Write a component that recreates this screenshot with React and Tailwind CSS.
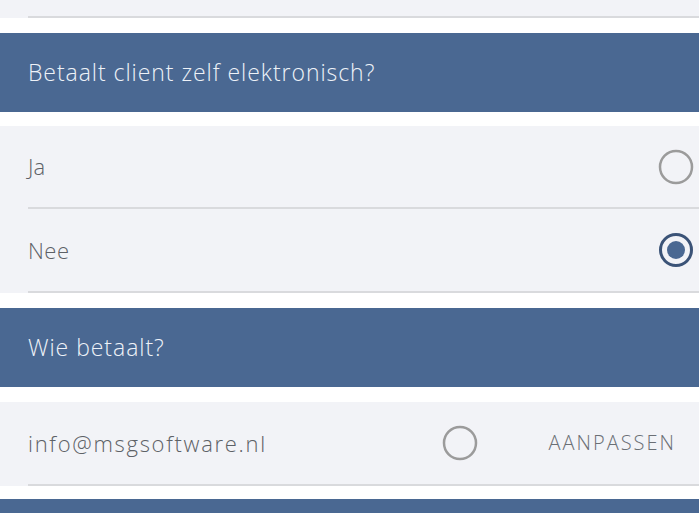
const Radio = ({ checked }) =>
  checked ? (
    <svg width="36" height="36" viewBox="0 0 36 36">
      <circle cx="18" cy="18" r="15.5" fill="none" stroke="#3b5377" strokeWidth="3" />
      <circle cx="18" cy="18" r="9" fill="#4a6892" />
    </svg>
  ) : (
    <svg width="36" height="36" viewBox="0 0 36 36">
      <circle cx="18" cy="18" r="16" fill="none" stroke="#9b9b9b" strokeWidth="2.5" />
    </svg>
  )

const Header = ({ children, className = "" }) => (
  <div className={`bg-[#4a6892] text-[#eef2f8] text-[23px] tracking-[0.95px] pl-[28px] flex items-center ${className}`}>
    {children}
  </div>
)

const Row = ({ children, h = "h-[83px]" }) => (
  <div className={`ml-[28px] ${h} border-b-2 border-[#d9dadd] flex items-center justify-between`}>
    {children}
  </div>
)

export default function App() {
  return (
    <div className="w-[699px] h-[513px] overflow-hidden bg-white font-['Open_Sans',sans-serif] font-light">
      {/* top panel remnant */}
      <div className="bg-[#f2f3f7] h-[18px]">
        <div className="ml-[28px] h-full border-b-2 border-[#d9dadd]" />
      </div>

      <Header className="mt-[15px] h-[79px]">Betaalt client zelf elektronisch?</Header>

      <div className="mt-[14px] bg-[#f2f3f7]">
        <Row>
          <span className="text-[22px] text-[#5d6166]">Ja</span>
          <span className="mr-[5px] flex"><Radio /></span>
        </Row>
        <Row h="h-[84px]">
          <span className="text-[22px] tracking-[0.5px] text-[#5d6166]">Nee</span>
          <span className="mr-[5px] flex"><Radio checked /></span>
        </Row>
      </div>

      <Header className="mt-[15px] h-[79px]">Wie betaalt?</Header>

      <div className="mt-[15px] bg-[#f2f3f7]">
        <Row h="h-[84px]">
          <span className="text-[22px] tracking-[1.7px] text-[#5d6166]">info@msgsoftware.nl</span>
          <div className="flex items-center mr-[23px]">
            <Radio />
            <span className="ml-[69px] w-[129px] text-right text-[20px] tracking-[2px] text-[#6b6f75]">AANPASSEN</span>
          </div>
        </Row>
      </div>

      <Header className="mt-[13px] h-[40px]" />
    </div>
  )
}
